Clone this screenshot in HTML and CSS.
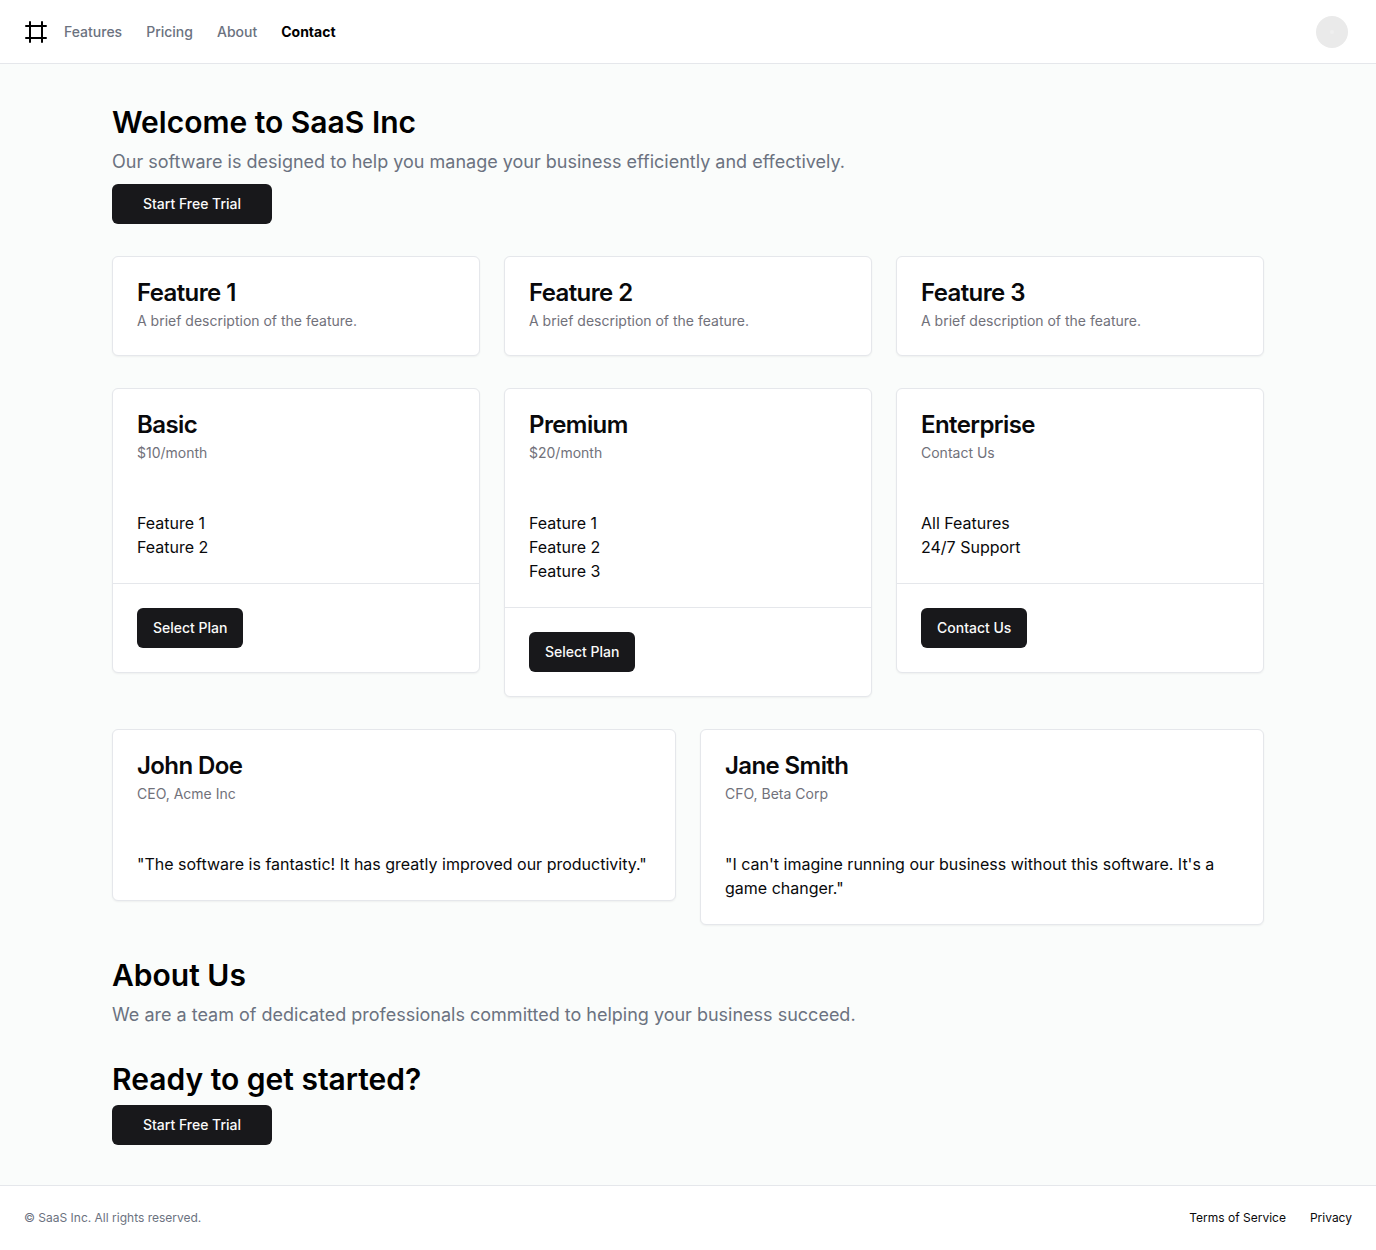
FILE: index.html
```html
<!DOCTYPE html>
<html lang="en">
<head>
<meta charset="utf-8">
<meta name="viewport" content="width=device-width, initial-scale=1">
<title>SaaS Inc</title>
<link rel="stylesheet" href="styles.css">
</head>
<body>
<header class="topbar">
  <nav class="nav">
    <a class="logo" href="#" aria-label="SaaS Inc">
      <svg width="24" height="24" viewBox="0 0 24 24" fill="none" stroke="currentColor" stroke-width="2" stroke-linecap="round" stroke-linejoin="round"><path d="M22 6H2M22 18H2M6 2v20M18 2v20"/></svg>
    </a>
    <a href="#">Features</a>
    <a href="#">Pricing</a>
    <a href="#">About</a>
    <a class="current" href="#">Contact</a>
  </nav>
  <button class="avatar" type="button" aria-label="Account menu">
    <svg width="32" height="32" viewBox="0 0 32 32"><circle cx="16" cy="16" r="16" fill="#eaeaea"/><circle cx="16" cy="16" r="2" fill="#efefef"/></svg>
  </button>
</header>
<main class="main">
  <div class="container">
    <section class="intro">
      <h1>Welcome to SaaS Inc</h1>
      <p>Our software is designed to help you manage your business efficiently and effectively.</p>
      <button class="button wide" type="button">Start Free Trial</button>
    </section>
    <section class="grid thirds">
      <article class="card"><div class="card-head"><h3>Feature 1</h3><p>A brief description of the feature.</p></div></article>
      <article class="card"><div class="card-head"><h3>Feature 2</h3><p>A brief description of the feature.</p></div></article>
      <article class="card"><div class="card-head"><h3>Feature 3</h3><p>A brief description of the feature.</p></div></article>
    </section>
    <section class="grid thirds">
      <article class="card">
        <div class="card-head"><h3>Basic</h3><p>$10/month</p></div>
        <ul class="card-body"><li>Feature 1</li><li>Feature 2</li></ul>
        <div class="card-foot"><button class="button" type="button">Select Plan</button></div>
      </article>
      <article class="card">
        <div class="card-head"><h3>Premium</h3><p>$20/month</p></div>
        <ul class="card-body"><li>Feature 1</li><li>Feature 2</li><li>Feature 3</li></ul>
        <div class="card-foot"><button class="button" type="button">Select Plan</button></div>
      </article>
      <article class="card">
        <div class="card-head"><h3>Enterprise</h3><p>Contact Us</p></div>
        <ul class="card-body"><li>All Features</li><li>24/7 Support</li></ul>
        <div class="card-foot"><button class="button" type="button">Contact Us</button></div>
      </article>
    </section>
    <section class="grid halves">
      <article class="card">
        <div class="card-head"><h3>John Doe</h3><p>CEO, Acme Inc</p></div>
        <p class="card-body">"The software is fantastic! It has greatly improved our productivity."</p>
      </article>
      <article class="card">
        <div class="card-head"><h3>Jane Smith</h3><p>CFO, Beta Corp</p></div>
        <p class="card-body">"I can't imagine running our business without this software. It's a game changer."</p>
      </article>
    </section>
    <section class="intro">
      <h2>About Us</h2>
      <p>We are a team of dedicated professionals committed to helping your business succeed.</p>
    </section>
    <section class="intro">
      <h2>Ready to get started?</h2>
      <button class="button wide" type="button">Start Free Trial</button>
    </section>
  </div>
</main>
<footer class="footer">
  <p>© SaaS Inc. All rights reserved.</p>
  <nav class="legal"><a href="#">Terms of Service</a><a href="#">Privacy</a></nav>
</footer>
</body>
</html>
```
FILE: styles.css
```css
* { box-sizing: border-box; margin: 0; padding: 0; }

body {
  display: flex;
  flex-direction: column;
  min-height: 100vh;
  font: 400 16px/24px Inter, sans-serif;
  color: #09090b;
  background: #fff;
}

a { color: inherit; text-decoration: none; }
ul { list-style: none; }
svg { display: block; }

.topbar {
  display: flex;
  align-items: center;
  justify-content: space-between;
  height: 64px;
  padding: 0 28px 0 24px;
  border-bottom: 1px solid #e5e7eb;
}

.nav {
  display: flex;
  align-items: center;
  gap: 24px;
  font-size: 14px;
  line-height: 20px;
  font-weight: 500;
  color: #6b7280;
}
.logo { margin-right: -8px; color: #000; }
.current { color: #000; font-weight: 700; }

.avatar { border: 0; border-radius: 50%; background: none; }

.main { flex: 1; padding: 40px; background: #fafcfb; }

.container {
  display: grid;
  gap: 32px;
  max-width: 1152px;
  margin: 0 auto;
}

.intro { display: grid; justify-items: start; gap: 8px; }
.intro h1, .intro h2 {
  font-size: 30px;
  line-height: 36px;
  font-weight: 600;
  color: #000;
}
.intro p { font-size: 18px; line-height: 28px; color: #6b7280; }

.button {
  height: 40px;
  padding: 0 16px;
  border: 0;
  border-radius: 6px;
  background: #18181b;
  color: #fafafa;
  font: 500 14px/20px Inter, sans-serif;
}
.wide { width: 160px; }

.grid { display: grid; align-items: start; gap: 24px; }
.thirds { grid-template-columns: repeat(3, 1fr); }
.halves { grid-template-columns: repeat(2, 1fr); }

.card {
  border: 1px solid #e5e7eb;
  border-radius: 6px;
  background: #fff;
  box-shadow: 0 1px 2px rgba(0, 0, 0, 0.05);
}
.card-head { padding: 24px; }
.card-head h3 {
  margin-bottom: 6px;
  font-size: 24px;
  line-height: 24px;
  font-weight: 600;
  letter-spacing: -0.025em;
}
.card-head p { font-size: 14px; line-height: 20px; color: #71717a; }
.card-body { padding: 24px; }
.card-foot { padding: 24px; border-top: 1px solid #e5e7eb; }

.footer {
  display: flex;
  align-items: center;
  justify-content: space-between;
  padding: 24px;
  border-top: 1px solid #e5e7eb;
  font-size: 12px;
  line-height: 16px;
}
.footer p { color: #6b7280; }
.legal { display: flex; gap: 24px; }
```
